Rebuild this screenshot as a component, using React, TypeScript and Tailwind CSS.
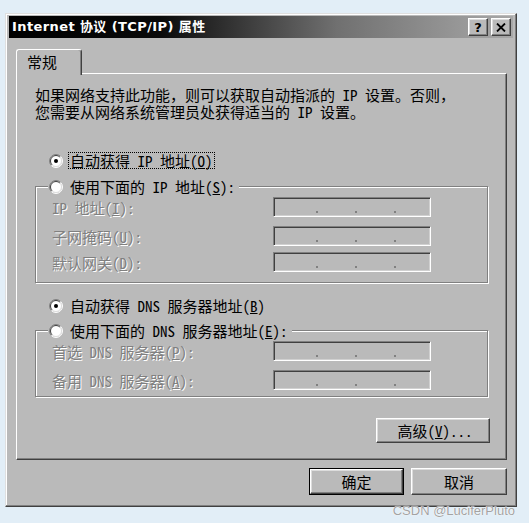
import React from 'react';

const raised =
  'border border-t-white border-l-white border-r-[#404040] border-b-[#404040] shadow-[inset_-1px_-1px_#808080,inset_1px_1px_#dcdcdc]';
const sunken =
  'border border-t-[#808080] border-l-[#808080] border-r-white border-b-white shadow-[inset_1px_1px_#404040,inset_-1px_-1px_#d0d0d0]';
const cjk = "font-['Noto_Sans_Mono_CJK_SC','Noto_Sans_CJK_SC',sans-serif]";
const disabled = 'text-[#808080] [text-shadow:1px_1px_0_#ffffff]';

const Radio = ({ checked = false }: { checked?: boolean }) => (
  <svg width="14" height="14" viewBox="0 0 14 14" className="shrink-0">
    <circle cx="7" cy="7" r="6" fill="#ffffff" />
    <path d="M2.4 11.6 A6.5 6.5 0 0 1 11.6 2.4" stroke="#808080" fill="none" />
    <path d="M11.6 2.4 A6.5 6.5 0 0 1 2.4 11.6" stroke="#ffffff" fill="none" />
    <path d="M3.1 10.9 A5.5 5.5 0 0 1 10.9 3.1" stroke="#404040" fill="none" />
    <path d="M10.9 3.1 A5.5 5.5 0 0 1 3.1 10.9" stroke="#dcdcdc" fill="none" />
    {checked && <circle cx="7" cy="7" r="2" fill="#000000" />}
  </svg>
);

// disabled ip address box with the three dots
const IpBox = () => (
  <div className={`w-[158px] h-[20px] ${sunken} flex items-end pb-[3px] pl-[42px] gap-[37px]`}>
    <span className="w-[2px] h-[2px] bg-[#808080]" />
    <span className="w-[2px] h-[2px] bg-[#808080]" />
    <span className="w-[2px] h-[2px] bg-[#808080]" />
  </div>
);

const FieldRow = ({ label, className = '' }: { label: React.ReactNode; className?: string }) => (
  <div className={`flex items-center ${className}`}>
    <span className={`w-[237px] pl-[16px] leading-[17px] ${disabled}`}>{label}</span>
    <IpBox />
  </div>
);

const Legend = ({ children }: { children: React.ReactNode }) => (
  <legend className="ml-[12px] pl-[1px] pr-[4px] bg-[#bababa]">
    <span className="flex items-center h-[17px]">
      <Radio />
      <span className="ml-[7px] leading-[17px]">{children}</span>
    </span>
  </legend>
);

export default function App() {
  return (
    <div className="relative w-[529px] h-[523px] bg-[#e2eef7] pt-[13px] pl-[5px] overflow-hidden">
      <div
        className={`w-[512px] h-[494px] bg-[#bababa] border border-t-[#dfdfdf] border-l-[#dfdfdf] border-r-[#404040] border-b-[#404040] shadow-[inset_-1px_-1px_#808080,inset_1px_1px_#ffffff] px-[3px] pt-[2px] flex flex-col ${cjk} text-[15px] text-black`}
      >
        {/* Title bar */}
        <div className="h-[22px] flex items-center justify-between pl-[3px] pr-[2px] bg-[linear-gradient(to_right,#000000_0%,#0a0a0a_30%,#707070_65%,#a8a8a8_100%)]">
          <span className="text-white font-bold text-[13px] font-['DejaVu_Sans','Noto_Sans_CJK_SC',sans-serif] tracking-[0.4px]">
            Internet 协议 (TCP/IP) 属性
          </span>
          <div className="flex gap-[3px]">
            <div className={`w-[20px] h-[18px] bg-[#bababa] ${raised} flex items-center justify-center`}>
              <span className="font-bold text-[13px] leading-none font-['DejaVu_Sans',sans-serif] text-black">?</span>
            </div>
            <div className={`w-[20px] h-[18px] bg-[#bababa] ${raised} flex items-center justify-center`}>
              <svg width="10" height="9" viewBox="0 0 10 9">
                <path d="M1 0.5 L9 8.5 M9 0.5 L1 8.5" stroke="#000" strokeWidth="1.8" />
              </svg>
            </div>
          </div>
        </div>

        {/* Tabs + panel */}
        <div className="mt-[11px] pl-[7px] pr-[6px]">
          <div className="relative z-10 -mb-[2px] w-[66px] h-[26px] bg-[#bababa] border-t border-l border-r border-t-white border-l-white border-r-[#404040] rounded-t-[3px] shadow-[inset_-1px_0_#808080] flex pl-[10px] pt-[3px]">
            <span className="leading-[17px]">常规</span>
          </div>
          <div className="h-[387px] border border-t-white border-l-white border-r-[#404040] border-b-[#404040] shadow-[inset_-1px_-1px_#808080] pl-[18px] pr-[18px] pt-[12px]">
            <p className="leading-[17px]">
              如果网络支持此功能，则可以获取自动指派的 IP 设置。否则，
              <br />
              您需要从网络系统管理员处获得适当的 IP 设置。
            </p>

            <div className="mt-[32px] flex items-center h-[17px] pl-[14px]">
              <Radio checked />
              <span className="ml-[5px] border border-dotted border-black px-[1px] leading-[15px]">
                自动获得 IP 地址(<u>O</u>)
              </span>
            </div>

            <fieldset className="mt-[9px] border border-[#808080] shadow-[inset_1px_1px_#ffffff,1px_1px_#ffffff] pt-[2px] pb-[10px]">
              <Legend>
                使用下面的 IP 地址(<u>S</u>):
              </Legend>
              <FieldRow label={<>IP 地址(<u>I</u>):</>} />
              <FieldRow className="mt-[9px]" label={<>子网掩码(<u>U</u>):</>} />
              <FieldRow className="mt-[6px]" label={<>默认网关(<u>D</u>):</>} />
            </fieldset>

            <div className="mt-[14px] flex items-center h-[17px] pl-[14px]">
              <Radio checked />
              <span className="ml-[7px] leading-[17px]">
                自动获得 DNS 服务器地址(<u>B</u>)
              </span>
            </div>

            <fieldset className="mt-[8px] border border-[#808080] shadow-[inset_1px_1px_#ffffff,1px_1px_#ffffff] pt-[2px] pb-[6px]">
              <Legend>
                使用下面的 DNS 服务器地址(<u>E</u>):
              </Legend>
              <FieldRow label={<>首选 DNS 服务器(<u>P</u>):</>} />
              <FieldRow className="mt-[9px]" label={<>备用 DNS 服务器(<u>A</u>):</>} />
            </fieldset>

            <div className="mt-[21px] flex justify-end -mr-[2px]">
              <button className={`w-[114px] h-[25px] bg-[#bababa] ${raised} leading-[17px] pl-[4px]`}>
                高级(<u>V</u>)...
              </button>
            </div>
          </div>

          {/* Bottom buttons */}
          <div className="mt-[8px] flex justify-end gap-[7px]">
            <div className="w-[95px] h-[27px] border border-black">
              <button className={`w-full h-full bg-[#bababa] ${raised} leading-[17px]`}>确定</button>
            </div>
            <button className={`w-[96px] h-[27px] bg-[#bababa] ${raised} leading-[17px]`}>取消</button>
          </div>
        </div>
      </div>

      {/* watermark */}
      <span className="absolute right-[14px] top-[501px] text-[13px] font-['Liberation_Sans',sans-serif] text-[#a3a3a3] [text-shadow:0_0_1px_#ffffff,0_0_1px_#ffffff]">
        CSDN @LuciferPluto
      </span>
    </div>
  );
}
